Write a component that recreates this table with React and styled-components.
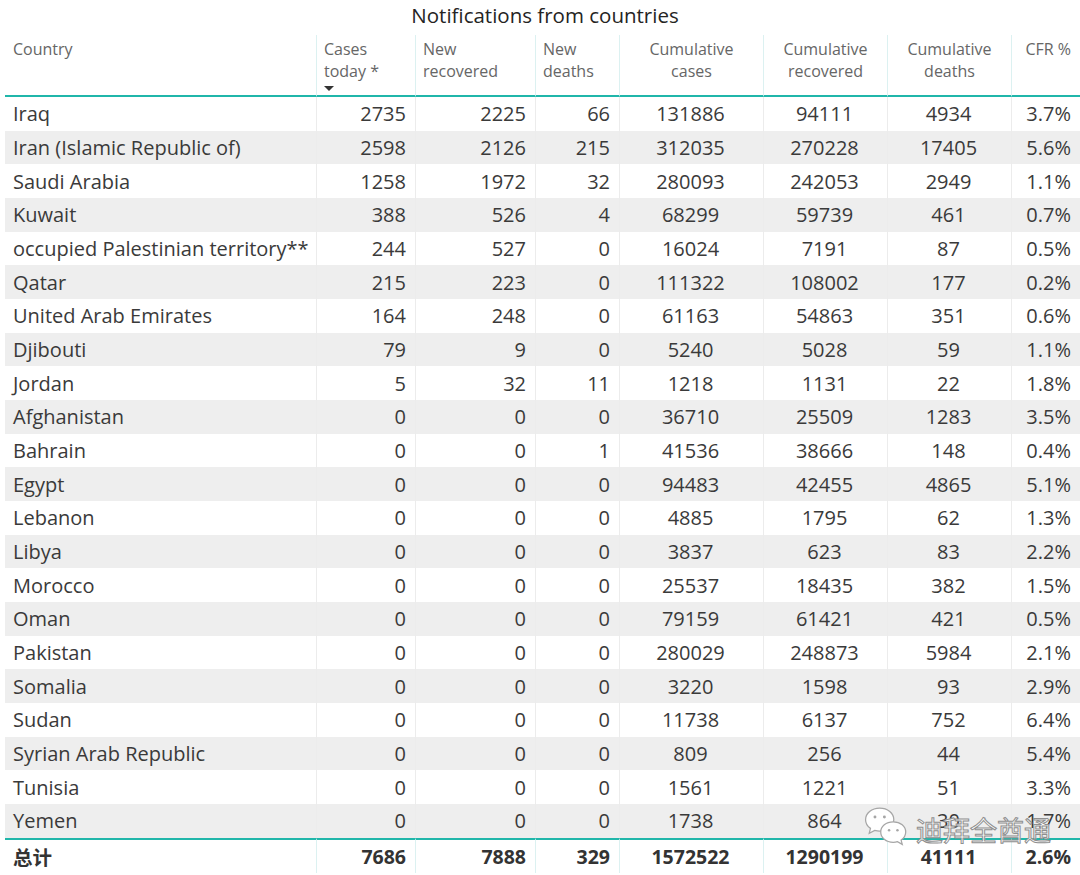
import React from "react";
import styled, { createGlobalStyle } from "styled-components";

const GlobalStyle = createGlobalStyle`
  html, body { margin: 0; padding: 0; background: #fff; }
  body { font-family: "Open Sans", "Noto Sans", sans-serif; }
`;

const rows = [
  ["Iraq", 2735, 2225, 66, 131886, 94111, 4934, "3.7%"],
  ["Iran (Islamic Republic of)", 2598, 2126, 215, 312035, 270228, 17405, "5.6%"],
  ["Saudi Arabia", 1258, 1972, 32, 280093, 242053, 2949, "1.1%"],
  ["Kuwait", 388, 526, 4, 68299, 59739, 461, "0.7%"],
  ["occupied Palestinian territory**", 244, 527, 0, 16024, 7191, 87, "0.5%"],
  ["Qatar", 215, 223, 0, 111322, 108002, 177, "0.2%"],
  ["United Arab Emirates", 164, 248, 0, 61163, 54863, 351, "0.6%"],
  ["Djibouti", 79, 9, 0, 5240, 5028, 59, "1.1%"],
  ["Jordan", 5, 32, 11, 1218, 1131, 22, "1.8%"],
  ["Afghanistan", 0, 0, 0, 36710, 25509, 1283, "3.5%"],
  ["Bahrain", 0, 0, 1, 41536, 38666, 148, "0.4%"],
  ["Egypt", 0, 0, 0, 94483, 42455, 4865, "5.1%"],
  ["Lebanon", 0, 0, 0, 4885, 1795, 62, "1.3%"],
  ["Libya", 0, 0, 0, 3837, 623, 83, "2.2%"],
  ["Morocco", 0, 0, 0, 25537, 18435, 382, "1.5%"],
  ["Oman", 0, 0, 0, 79159, 61421, 421, "0.5%"],
  ["Pakistan", 0, 0, 0, 280029, 248873, 5984, "2.1%"],
  ["Somalia", 0, 0, 0, 3220, 1598, 93, "2.9%"],
  ["Sudan", 0, 0, 0, 11738, 6137, 752, "6.4%"],
  ["Syrian Arab Republic", 0, 0, 0, 809, 256, 44, "5.4%"],
  ["Tunisia", 0, 0, 0, 1561, 1221, 51, "3.3%"],
  ["Yemen", 0, 0, 0, 1738, 864, 30, "1.7%"],
];

const totals = ["总计", 7686, 7888, 329, 1572522, 1290199, 41111, "2.6%"];

// header label lines + alignment of each column (header / body)
const columns = [
  { label: ["Country"], head: "left", body: "left" },
  { label: ["Cases", "today *"], head: "left", body: "right", sorted: true },
  { label: ["New", "recovered"], head: "left", body: "right" },
  { label: ["New", "deaths"], head: "left", body: "right" },
  { label: ["Cumulative", "cases"], head: "center", body: "center" },
  { label: ["Cumulative", "recovered"], head: "center", body: "center" },
  { label: ["Cumulative", "deaths"], head: "center", body: "center" },
  { label: ["CFR %"], head: "right", body: "right" },
];

const Page = styled.div`
  position: relative;
  width: 1080px;
  height: 875px;
  overflow: hidden;
  padding-left: 5px;
  box-sizing: border-box;
  color: #333;
`;

const Title = styled.div`
  height: 35px;
  padding: 0 0 5px 5px;
  box-sizing: border-box;
  display: flex;
  align-items: center;
  justify-content: center;
  font-size: 20.5px;
  color: #252423;
`;

const Grid = styled.div`
  display: grid;
  grid-template-columns: 311px 99px 120px 84px 144px 124px 124px 1fr;
`;

const HeadCell = styled.div`
  height: 62px;
  box-sizing: border-box;
  padding: 3px ${(p) => (p.$align === "right" ? "9px" : "7px")} 0
    ${(p) => (p.$first ? "8px" : "7px")};
  border-left: ${(p) => (p.$first ? "none" : "1px solid #dcf1f1")};
  border-bottom: 2px solid #20b6aa;
  text-align: ${(p) => p.$align};
  font-size: 16px;
  line-height: 22px;
  color: #666;
  position: relative;
`;

const SortArrow = styled.span`
  position: absolute;
  left: 7px;
  top: 51px;
  width: 0;
  height: 0;
  border-left: 5px solid transparent;
  border-right: 5px solid transparent;
  border-top: 5px solid #333;
`;

const Cell = styled.div`
  height: 33.68px;
  box-sizing: border-box;
  display: flex;
  align-items: center;
  justify-content: ${(p) =>
    p.$align === "left" ? "flex-start" : p.$align === "right" ? "flex-end" : "center"};
  padding: 0 9px 0 ${(p) => (p.$first ? "8px" : "7px")};
  border-left: ${(p) => (p.$first ? "none" : "1px solid #ececec")};
  background: ${(p) => (p.$shade ? "#eeeeee" : "#fff")};
  font-size: 20px;
  color: #3a3a3a;
  white-space: nowrap;
`;

const TotalCell = styled(Cell)`
  height: 35px;
  background: #fff;
  border-top: 2px solid #20b6aa;
  border-left: ${(p) => (p.$first ? "none" : "1px solid #dcf1f1")};
  font-weight: 700;
  font-size: 19.5px;
  font-family: "Open Sans", "Noto Sans CJK SC", sans-serif;
  color: #333;
`;

const Watermark = styled.div`
  position: absolute;
  left: 864px;
  top: 804px;
  display: flex;
  align-items: center;
  gap: 6px;
  pointer-events: none;
`;

const WatermarkText = styled.span`
  font-family: "Noto Sans CJK SC", sans-serif;
  font-size: 27px;
  color: rgba(255, 255, 255, 0.85);
  -webkit-text-stroke: 1px #8f8f8f;
  margin-top: 6px;
`;

function WeChatIcon() {
  return (
    <svg width="46" height="42" viewBox="0 0 44 40">
      <path
        d="M15 2C7.3 2 1.5 7 1.5 13c0 3.4 1.8 6.3 4.7 8.3L5 26l5.2-2.8c1.5.4 3 .7 4.8.7 7.7 0 13.5-5 13.5-11S22.7 2 15 2z"
        fill="#fff"
        stroke="#a6a6a6"
        strokeWidth="1.2"
      />
      <circle cx="10.5" cy="10.5" r="1.4" fill="#a6a6a6" />
      <circle cx="19.5" cy="10.5" r="1.4" fill="#a6a6a6" />
      <path
        d="M28 15c-7 0-12 4.4-12 9.8s5 9.8 12 9.8c1.4 0 2.8-.2 4-.6l4.6 2.6-1.1-4.1c2.6-1.8 4.4-4.6 4.4-7.7C39.9 19.4 34.9 15 28 15z"
        fill="#fff"
        stroke="#a6a6a6"
        strokeWidth="1.2"
      />
      <circle cx="24" cy="23" r="1.2" fill="#a6a6a6" />
      <circle cx="32" cy="23" r="1.2" fill="#a6a6a6" />
    </svg>
  );
}

export default function App() {
  return (
    <>
      <GlobalStyle />
      <Page>
        <Title>Notifications from countries</Title>
        <Grid>
          {columns.map((c, i) => (
            <HeadCell key={i} $align={c.head} $first={i === 0}>
              {c.label.map((l, j) => (
                <div key={j}>{l}</div>
              ))}
              {c.sorted && <SortArrow />}
            </HeadCell>
          ))}
          {rows.map((r, ri) =>
            r.map((v, ci) => (
              <Cell
                key={ri + "-" + ci}
                $align={columns[ci].body}
                $first={ci === 0}
                $shade={ri % 2 === 1}
              >
                {v}
              </Cell>
            ))
          )}
          {totals.map((v, ci) => (
            <TotalCell key={"t" + ci} $align={columns[ci].body} $first={ci === 0}>
              {v}
            </TotalCell>
          ))}
        </Grid>
        <Watermark>
          <WeChatIcon />
          <WatermarkText>迪拜全酋通</WatermarkText>
        </Watermark>
      </Page>
    </>
  );
}
